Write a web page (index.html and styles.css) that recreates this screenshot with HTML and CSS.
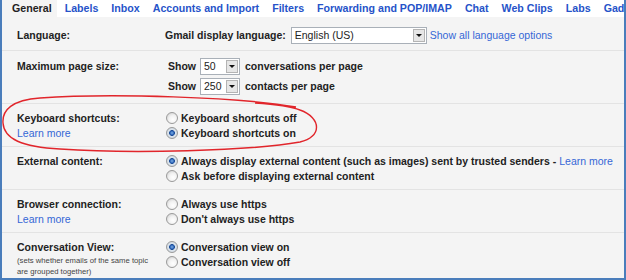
FILE: index.html
```html
<!DOCTYPE html>
<html lang="en">
<head>
    <meta charset="UTF-8">
    <title>Settings - General</title>
    <link rel="stylesheet" href="styles.css">
</head>
<body>
    <div class="frame">
        <div class="tabs">
            <span class="tab active">General</span>
            <a class="tab">Labels</a>
            <a class="tab">Inbox</a>
            <a class="tab">Accounts and Import</a>
            <a class="tab">Filters</a>
            <a class="tab">Forwarding and POP/IMAP</a>
            <a class="tab">Chat</a>
            <a class="tab">Web Clips</a>
            <a class="tab">Labs</a>
            <a class="tab">Gadgets</a>
        </div>
        <div class="settings">
            <div class="row row-select row-first">
                <div class="label">Language:</div>
                <div class="value">
                    <div class="line">Gmail display language:
                        <span class="select select-wide">English (US)<span class="arrow"></span></span>
                        <a class="link">Show all language options</a>
                    </div>
                </div>
            </div>
            <div class="row row-select">
                <div class="label">Maximum page size:</div>
                <div class="value">
                    <div class="line indent">Show <span class="select">50<span class="arrow"></span></span> conversations per page</div>
                    <div class="line indent">Show <span class="select">250<span class="arrow"></span></span> contacts per page</div>
                </div>
            </div>
            <div class="row">
                <div class="label">Keyboard shortcuts:<br><a class="link">Learn more</a></div>
                <div class="value">
                    <div class="line"><span class="radio"></span>Keyboard shortcuts off</div>
                    <div class="line"><span class="radio on"></span>Keyboard shortcuts on</div>
                </div>
            </div>
            <div class="row">
                <div class="label">External content:</div>
                <div class="value">
                    <div class="line"><span class="radio on"></span>Always display external content (such as images) sent by trusted senders - <a class="link">Learn more</a></div>
                    <div class="line"><span class="radio"></span>Ask before displaying external content</div>
                </div>
            </div>
            <div class="row">
                <div class="label">Browser connection:<br><a class="link">Learn more</a></div>
                <div class="value">
                    <div class="line"><span class="radio"></span>Always use https</div>
                    <div class="line"><span class="radio"></span>Don't always use https</div>
                </div>
            </div>
            <div class="row">
                <div class="label">Conversation View:
                    <div class="note">(sets whether emails of the same topic<br>are grouped together)</div>
                </div>
                <div class="value">
                    <div class="line"><span class="radio on"></span>Conversation view on</div>
                    <div class="line"><span class="radio"></span>Conversation view off</div>
                </div>
            </div>
        </div>
        <!-- hand drawn marker round the keyboard row -->
        <svg class="scribble" width="626" height="280" viewBox="0 0 626 280">
            <path d="M 296 107 C 240 97, 110 93, 40 98 C 12 100, 2 110, 3 123 C 4 139, 22 147, 60 149 C 130 154, 250 151, 300 142 C 322 137, 322 118, 300 110 C 290 106, 270 104, 255 103" fill="none" stroke="#e1252b" stroke-width="1.4"/>
        </svg>
    </div>
</body>
</html>
```

FILE: styles.css
```css
body {
    margin: 0;
    padding: 0;
    font-family: "Liberation Sans", Arial, sans-serif;
    background-color: #fff;
}
.frame {
    position: relative;
    width: 626px;
    height: 280px;
    box-sizing: border-box;
    border: 2px solid #4a7dbb;
    border-top: none;
    background-color: #f4f4f4;
    overflow: hidden;
}
.tabs {
    display: flex;
    height: 17px;
    background-color: #fff;
    white-space: nowrap;
    font-size: 10.65px;
    font-weight: bold;
    line-height: 17px;
}
.tab {
    padding: 0 6.5px;
    color: #2653c9;
    flex: none;
}
.tab.active {
    padding-left: 10px;
    padding-right: 5px;
    margin-right: 1.5px;
    color: #222;
    background-color: #f4f4f4;
}
.row {
    display: grid;
    grid-template-columns: 148px 1fr;
    padding: 7px 0 6px 15px;
    border-top: 1px solid #e3e3e3;
    font-size: 10.5px;
    font-weight: bold;
    line-height: 14.5px;
    color: #222;
    white-space: nowrap;
}
.row-first {
    border-top: none;
    padding-top: 9px;
}
.row-select {
    line-height: 20px;
    padding-top: 5px;
    padding-bottom: 7px;
}
.row-first.row-select {
    padding-top: 9px;
    padding-bottom: 6px;
    line-height: 18px;
}
.line {
    display: flex;
    align-items: center;
}
.indent {
    padding-left: 3px;
}
.link {
    color: #3467d6;
    font-weight: normal;
}
.line .link {
    margin-left: 3px;
}
.note {
    font-size: 7.7px;
    font-weight: normal;
    line-height: 11px;
    color: #444;
}
.select {
    display: inline-flex;
    align-items: center;
    justify-content: space-between;
    box-sizing: border-box;
    width: 40px;
    height: 17px;
    margin: 0 5px 0 4px;
    padding: 0 1px 0 3px;
    border: 1px solid #a9b0b8;
    background-color: #fff;
    font-weight: normal;
    color: #222;
    line-height: 15px;
}
.select-wide {
    width: 136px;
    margin-left: 5px;
    margin-right: 0;
}
.arrow {
    position: relative;
    width: 12px;
    height: 13px;
    box-sizing: border-box;
    border: 1px solid #b4b4b4;
    background-color: #e6e6e6;
}
.arrow::after {
    content: "";
    position: absolute;
    left: 2px;
    top: 4px;
    border-left: 3px solid transparent;
    border-right: 3px solid transparent;
    border-top: 3px solid #111;
}
.radio {
    display: inline-block;
    box-sizing: border-box;
    width: 12px;
    height: 12px;
    margin: 0 3px 0 1px;
    border: 1px solid #9a9a9a;
    border-radius: 50%;
    background: radial-gradient(circle at 60% 65%, #fff 0%, #f2f2f2 45%, #c9c9c9 100%);
    flex: none;
}
.radio.on {
    background: radial-gradient(circle at 50% 50%, #7fb2e6 0%, #2a61b5 28%, #1d4c93 38%, #dde6ef 44%, #c8d0d8 100%);
}
.scribble {
    position: absolute;
    left: -2px;
    top: 0;
    pointer-events: none;
}
```
